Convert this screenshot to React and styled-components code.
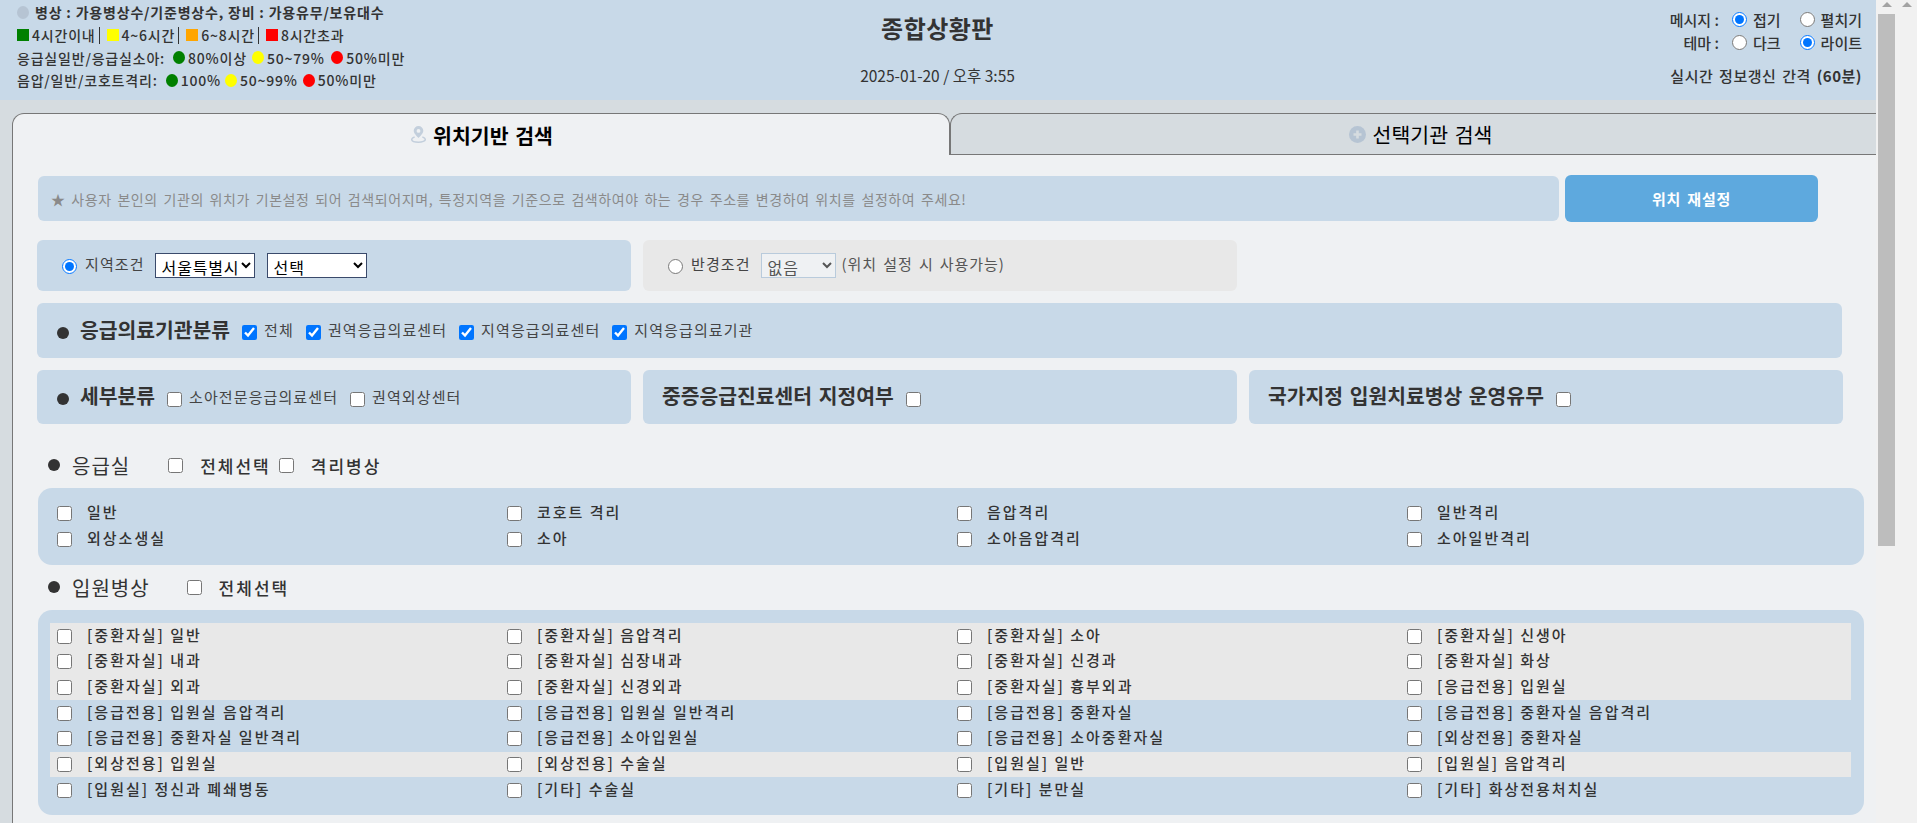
import React from 'react';
import styled, { createGlobalStyle } from 'styled-components';

const GlobalStyle = createGlobalStyle`
  html, body {
    margin: 0;
    height: 100%;
    overflow: hidden;
    background: #d6dce0;
    font-family: "Noto Sans CJK KR", "Noto Sans", sans-serif;
    color: #333;
  }
  * {
    box-sizing: border-box;
  }
`;

const Shell = styled.div`
  display: flex;
  height: 823px;
  width: 1917px;
`;
const Page = styled.div`
  width: 1876px;
  height: 823px;
  overflow: hidden;
  flex: none;
`;
const ScrollBar = styled.div`
  flex: none;
  width: ${(p) => p.$width}px;
  background: #f1f1f1;
  display: flex;
  flex-direction: column;
  align-items: center;
`;
const ScrollArrow = styled.div`
  margin-top: 2px;
  height: 0;
  width: 0;
  border-left: 5px solid transparent;
  border-right: 5px solid transparent;
  border-bottom: 5px solid #a3a3a3;
`;
const ScrollThumb = styled.div`
  margin-top: 7px;
  width: 17px;
  height: 532px;
  background: #bdbdbd;
`;

const Header = styled.header`
  height: 100px;
  background: #c8d9e8;
  display: grid;
  grid-template-columns: 1fr 1fr 1fr;
  padding: 0 14px 0 17px;
`;
const Legend = styled.div`
  display: flex;
  flex-direction: column;
  padding-top: 1px;
  font-size: 14px;
`;
const LegendRow = styled.div`
  display: flex;
  align-items: center;
  height: 22.7px;
  white-space: pre;
  font-weight: ${(p) => (p.$bold ? 600 : 500)};
  letter-spacing: 0.8px;
`;
const Dot = styled.span`
  display: inline-block;
  flex: none;
  width: 12px;
  height: 13px;
  margin: 0 ${(p) => p.$after ?? 3}px 0 ${(p) => p.$gap ?? 8}px;
  border-radius: 50%;
  background: ${(p) => p.$color};
`;
const Swatch = styled.span`
  display: inline-block;
  width: 12px;
  height: 12px;
  margin-right: 3px;
  background: ${(p) => p.$color};
`;
const SwatchItem = styled.span`
  display: inline-flex;
  align-items: center;
  height: 17px;
  padding-right: 3px;
  margin-right: 7px;
  border-right: ${(p) => (p.$last ? 'none' : '1px solid #333')};
`;
const TitleBlock = styled.div`
  display: flex;
  flex-direction: column;
  align-items: center;
  padding-right: 4px;
`;
const Title = styled.h1`
  margin: 11px 0 0;
  font-size: 24px;
  line-height: 34px;
  font-weight: 600;
  letter-spacing: 0.5px;
  color: #333;
`;
const DateText = styled.div`
  margin-top: 19px;
  font-size: 15.5px;
  line-height: 22px;
  font-weight: 400;
`;
const Settings = styled.div`
  display: flex;
  flex-direction: column;
  align-items: flex-end;
  padding: 8px 0 0;
  font-size: 15px;
  font-weight: 500;
  white-space: nowrap;
`;
const SettingRow = styled.div`
  display: grid;
  grid-template-columns: auto 68px 62px;
  align-items: center;
  justify-content: end;
  height: 23px;
`;
const SettingLabel = styled.span`
  margin-right: 13px;
  text-align: right;
`;
const SettingOption = styled.label`
  display: flex;
  align-items: center;
  gap: 6px;
`;
const SmallRadio = styled.input.attrs({ type: 'radio' })`
  width: 15px;
  height: 15px;
  margin: 0;
`;
const RefreshText = styled.div`
  margin-top: 11px;
  line-height: 22px;
  font-weight: 500;
  letter-spacing: 0.5px;
  word-spacing: 2px;
  b {
    font-weight: 700;
  }
`;

const Content = styled.div`
  padding: 13px 0 0 12px;
`;
const Tabs = styled.div`
  display: grid;
  grid-template-columns: 938px 1fr;
  height: 42px;
`;
const Tab = styled.div`
  display: flex;
  align-items: center;
  justify-content: center;
  gap: 7px;
  padding-left: ${(p) => (p.$active ? 2 : 14)}px;
  font-size: 20.5px;
  word-spacing: 2px;
  color: #000;
  font-weight: ${(p) => (p.$active ? 700 : 400)};
  background: ${(p) => (p.$active ? '#eff1f3' : '#d6dce0')};
  border-top: 1px solid #777;
  border-left: 1px solid #777;
  border-right: ${(p) => (p.$active ? '1px solid #777' : 'none')};
  border-bottom: ${(p) => (p.$active ? 'none' : '1px solid #777')};
  border-radius: ${(p) => (p.$active ? '12px 12px 0 0' : '12px 0 0 0')};
`;
const Panel = styled.div`
  background: #eff1f3;
  border-left: 1px solid #777;
  height: 668px;
  padding: 20px 0 0 25px;
  display: flex;
  flex-direction: column;
`;
const NoticeRow = styled.div`
  display: flex;
  gap: 6px;
  height: 47px;
`;
const Notice = styled.div`
  width: 1521px;
  height: 45px;
  margin-top: 1px;
  padding-left: 13px;
  display: flex;
  align-items: center;
  border-radius: 6px;
  background: #c8d9e8;
  color: #8a8a8a;
  font-size: 14px;
  letter-spacing: 0.58px;
  word-spacing: 2px;
`;
const ResetButton = styled.button`
  width: 253px;
  height: 47px;
  border: none;
  border-radius: 6px;
  background: #5ea9de;
  color: #fff;
  font-family: inherit;
  font-size: 15px;
  font-weight: 700;
  letter-spacing: 0.8px;
  word-spacing: 2px;
`;
const CardRow = styled.div`
  display: flex;
  gap: 12px;
  margin-top: ${(p) => p.$top ?? 12}px;
  margin-left: -1px;
`;
const Card = styled.div`
  display: flex;
  align-items: center;
  width: ${(p) => (p.$wide ? '1805px' : '594px')};
  height: ${(p) => p.$height}px;
  padding-left: ${(p) => p.$pad ?? 20}px;
  border-radius: 6px;
  background: ${(p) => (p.$muted ? '#e8e8e8' : '#c8d9e8')};
  font-size: 15px;
  letter-spacing: 1.1px;
  word-spacing: 2px;
  color: #444;
`;
const Option = styled.label`
  display: inline-flex;
  align-items: center;
  gap: ${(p) => p.$inner ?? 7}px;
  margin-right: ${(p) => p.$gap ?? 12}px;
  white-space: nowrap;
`;
const OptionText = styled.span`
  position: relative;
  top: ${(p) => (p.$lift ? -2 : -1)}px;
`;
const Radio = styled.input.attrs({ type: 'radio' })`
  width: 15px;
  height: 15px;
  margin: 2px 0 0;
`;
const Check = styled.input.attrs({ type: 'checkbox' })`
  width: 15px;
  height: 15px;
  margin: ${(p) => (p.$low ? '4px 0 0' : '0')};
  flex: none;
`;
const Select = styled.select`
  height: 25px;
  width: ${(p) => p.$width}px;
  margin-left: ${(p) => p.$gap ?? 10}px;
  padding: 0 0 0 2px;
  font-family: inherit;
  font-size: 16px;
  letter-spacing: 0.8px;
  color: ${(p) => (p.$muted ? '#555' : '#000')};
  background: ${(p) => (p.$muted ? '#eff1f3' : '#fff')};
  border: 1px solid ${(p) => (p.$muted ? '#b9cbdc' : '#3a4a6b')};
  border-radius: 0;
`;
const Hint = styled.span`
  margin-left: 6px;
  color: #555;
  letter-spacing: 0.9px;
  position: relative;
  top: -2px;
`;
const Bullet = styled.span`
  flex: none;
  width: 12px;
  height: 12px;
  margin-top: ${(p) => p.$drop ?? 0}px;
  border-radius: 50%;
  background: #333;
`;
const CardTitle = styled.span`
  font-size: 20.4px;
  font-weight: 600;
  letter-spacing: 0;
  color: #333;
  margin: ${(p) => p.$margin ?? '0 12px 0 11px'};
  white-space: nowrap;
  position: relative;
  top: -2px;
`;
const SectionHead = styled.div`
  display: flex;
  align-items: center;
  height: 24px;
  margin-top: ${(p) => p.$top}px;
  padding-left: 10px;
`;
const SectionTitle = styled.span`
  font-size: 20px;
  letter-spacing: 1px;
  margin-left: 12px;
  margin-right: ${(p) => p.$gap}px;
  color: #333;
`;
const HeadOption = styled.label`
  display: inline-flex;
  align-items: center;
  gap: 17px;
  margin-right: 8px;
  font-size: 17px;
  font-weight: 500;
  letter-spacing: 2px;
  color: #333;
`;
const ItemPanel = styled.div`
  width: 1826px;
  margin-top: ${(p) => p.$top}px;
  padding: ${(p) => p.$pad};
  border-radius: 14px;
  background: #c8d9e8;
`;
const ItemGrid = styled.div`
  display: grid;
  grid-template-columns: repeat(4, 450px);
  width: 1801px;
  height: ${(p) => p.$rows * 25.67}px;
  background: ${(p) => (p.$shade ? '#e8e8e8' : 'transparent')};
  padding-left: 7px;
`;
const Item = styled.label`
  display: flex;
  align-items: center;
  height: 25.67px;
  gap: 15px;
  font-size: 15px;
  font-weight: 500;
  letter-spacing: 2px;
  color: #333;
  span {
    position: relative;
    top: -2px;
  }
`;

const PinIcon = () => (
  <svg width="15" height="17" viewBox="0 0 15 17">
    <path
      fill="#c3cfdc"
      fillRule="evenodd"
      d="M7.5 0a4.8 4.8 0 0 1 4.8 4.8c0 3-4.8 7.2-4.8 7.2s-4.8-4.2-4.8-7.2a4.8 4.8 0 0 1 4.8-4.8zM7.5 3a1.9 1.9 0 1 0 0 3.8a1.9 1.9 0 0 0 0-3.8z"
    />
    <path
      fill="none"
      stroke="#c3cfdc"
      strokeWidth="1.5"
      d="M3.6 11c-1.9.6-2.9 1.5-2.9 2.5c0 1.5 3 2.7 6.8 2.7s6.8-1.2 6.8-2.7c0-1-1-1.9-2.9-2.5"
    />
  </svg>
);

const PlusIcon = () => (
  <svg width="17" height="17" viewBox="0 0 17 17">
    <circle cx="8.5" cy="8.5" r="8.5" fill="#b6c4d3" />
    <path d="M8.5 4.5v8M4.5 8.5h8" stroke="#d6dce0" strokeWidth="2.6" />
  </svg>
);

const erRows = [
  ['일반', '코호트 격리', '음압격리', '일반격리'],
  ['외상소생실', '소아', '소아음압격리', '소아일반격리'],
];

// groups of rows: shaded ones are the grey bands in the picture
const bedGroups = [
  {
    shade: true,
    rows: [
      ['[중환자실] 일반', '[중환자실] 음압격리', '[중환자실] 소아', '[중환자실] 신생아'],
      ['[중환자실] 내과', '[중환자실] 심장내과', '[중환자실] 신경과', '[중환자실] 화상'],
      ['[중환자실] 외과', '[중환자실] 신경외과', '[중환자실] 흉부외과', '[응급전용] 입원실'],
    ],
  },
  {
    shade: false,
    rows: [
      ['[응급전용] 입원실 음압격리', '[응급전용] 입원실 일반격리', '[응급전용] 중환자실', '[응급전용] 중환자실 음압격리'],
      ['[응급전용] 중환자실 일반격리', '[응급전용] 소아입원실', '[응급전용] 소아중환자실', '[외상전용] 중환자실'],
    ],
  },
  {
    shade: true,
    rows: [['[외상전용] 입원실', '[외상전용] 수술실', '[입원실] 일반', '[입원실] 음압격리']],
  },
  {
    shade: false,
    rows: [['[입원실] 정신과 폐쇄병동', '[기타] 수술실', '[기타] 분만실', '[기타] 화상전용처치실']],
  },
];

const Items = ({ rows, shade }) => (
  <ItemGrid $rows={rows.length} $shade={shade}>
    {rows.flat().map((label) => (
      <Item key={label}>
        <Check />
        <span>{label}</span>
      </Item>
    ))}
  </ItemGrid>
);

const App = () => {
  return (
    <>
      <GlobalStyle />
      <Shell>
        <Page>
          <Header>
            <Legend>
              <LegendRow $bold>
                <Dot $color="#b6c4d3" $gap={0} $after={6} />
                병상 : 가용병상수/기준병상수, 장비 : 가용유무/보유대수
              </LegendRow>
              <LegendRow>
                <SwatchItem><Swatch $color="green" />4시간이내</SwatchItem>
                <SwatchItem><Swatch $color="yellow" />4~6시간</SwatchItem>
                <SwatchItem><Swatch $color="orange" />6~8시간</SwatchItem>
                <SwatchItem $last><Swatch $color="red" />8시간초과</SwatchItem>
              </LegendRow>
              <LegendRow>
                응급실일반/응급실소아:
                <Dot $color="green" />80%이상
                <Dot $color="yellow" $gap={5} />50~79%
                <Dot $color="red" $gap={6.5} />50%미만
              </LegendRow>
              <LegendRow>
                음압/일반/코호트격리:
                <Dot $color="green" />100%
                <Dot $color="yellow" $gap={4} />50~99%
                <Dot $color="red" $gap={5} />50%미만
              </LegendRow>
            </Legend>
            <TitleBlock>
              <Title>종합상황판</Title>
              <DateText>2025-01-20 / 오후 3:55</DateText>
            </TitleBlock>
            <Settings>
              <SettingRow>
                <SettingLabel>메시지 :</SettingLabel>
                <SettingOption><SmallRadio name="msg" defaultChecked />접기</SettingOption>
                <SettingOption><SmallRadio name="msg" />펼치기</SettingOption>
              </SettingRow>
              <SettingRow>
                <SettingLabel>테마 :</SettingLabel>
                <SettingOption><SmallRadio name="theme" />다크</SettingOption>
                <SettingOption><SmallRadio name="theme" defaultChecked />라이트</SettingOption>
              </SettingRow>
              <RefreshText>실시간 정보갱신 간격 <b>(60분)</b></RefreshText>
            </Settings>
          </Header>
          <Content>
            <Tabs>
              <Tab $active><PinIcon />위치기반 검색</Tab>
              <Tab><PlusIcon />선택기관 검색</Tab>
            </Tabs>
            <Panel>
              <NoticeRow>
                <Notice>
                  ★ 사용자 본인의 기관의 위치가 기본설정 되어 검색되어지며, 특정지역을 기준으로 검색하여야 하는 경우 주소를 변경하여 위치를 설정하여 주세요!
                </Notice>
                <ResetButton>위치 재설정</ResetButton>
              </NoticeRow>
              <CardRow $top={18}>
                <Card $height={51} $pad={25}>
                  <Option $gap={0} $inner={8}><Radio name="area" defaultChecked /><OptionText $lift>지역조건</OptionText></Option>
                  <Select $width={100}><option>서울특별시</option></Select>
                  <Select $width={100} $gap={12}><option>선택</option></Select>
                </Card>
                <Card $height={51} $pad={25} $muted>
                  <Option $gap={0} $inner={8}><Radio name="area" /><OptionText $lift>반경조건</OptionText></Option>
                  <Select $width={75} $muted><option>없음</option></Select>
                  <Hint>(위치 설정 시 사용가능)</Hint>
                </Card>
              </CardRow>
              <CardRow>
                <Card $wide $height={55}>
                  <Bullet $drop={4} />
                  <CardTitle>응급의료기관분류</CardTitle>
                  <Option><Check $low defaultChecked /><OptionText>전체</OptionText></Option>
                  <Option><Check $low defaultChecked /><OptionText>권역응급의료센터</OptionText></Option>
                  <Option><Check $low defaultChecked /><OptionText>지역응급의료센터</OptionText></Option>
                  <Option><Check $low defaultChecked /><OptionText>지역응급의료기관</OptionText></Option>
                </Card>
              </CardRow>
              <CardRow>
                <Card $height={54}>
                  <Bullet $drop={3} />
                  <CardTitle>세부분류</CardTitle>
                  <Option><Check $low /><OptionText>소아전문응급의료센터</OptionText></Option>
                  <Option><Check $low /><OptionText>권역외상센터</OptionText></Option>
                </Card>
                <Card $height={54} $pad={19}>
                  <CardTitle $margin="0 12px 0 0">중증응급진료센터 지정여부</CardTitle>
                  <Check $low />
                </Card>
                <Card $height={54} $pad={19}>
                  <CardTitle $margin="0 12px 0 0">국가지정 입원치료병상 운영유무</CardTitle>
                  <Check $low />
                </Card>
              </CardRow>
              <SectionHead $top={29}>
                <Bullet />
                <SectionTitle $gap={38}>응급실</SectionTitle>
                <HeadOption><Check />전체선택</HeadOption>
                <HeadOption><Check />격리병상</HeadOption>
              </SectionHead>
              <ItemPanel $top={11} $pad="13px 12px 13px 12px">
                <Items rows={erRows} />
              </ItemPanel>
              <SectionHead $top={10}>
                <Bullet />
                <SectionTitle $gap={37}>입원병상</SectionTitle>
                <HeadOption><Check />전체선택</HeadOption>
              </SectionHead>
              <ItemPanel $top={11} $pad="13px 13px 12px 12px">
                {bedGroups.map((group) => (
                  <Items key={group.rows[0][0]} rows={group.rows} shade={group.shade} />
                ))}
              </ItemPanel>
            </Panel>
          </Content>
        </Page>
        <ScrollBar $width={21}>
          <ScrollArrow />
          <ScrollThumb />
        </ScrollBar>
        <ScrollBar $width={20}>
          <ScrollArrow />
        </ScrollBar>
      </Shell>
    </>
  );
};

export default App;
